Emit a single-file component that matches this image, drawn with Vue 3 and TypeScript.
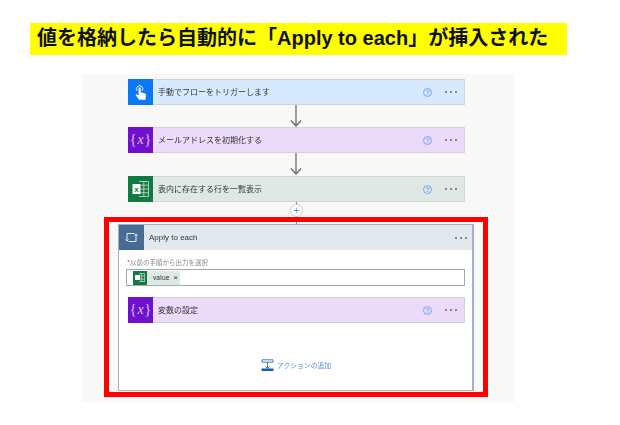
<script setup lang="ts">
interface Step { title: string; tone: string; kind: string }
const steps: Step[] = [
  { title: '手動でフローをトリガーします', tone: 'blue', kind: 'touch' },
  { title: 'メールアドレスを初期化する', tone: 'purple', kind: 'var' },
  { title: '表内に存在する行を一覧表示', tone: 'green', kind: 'excel' },
]
</script>

<template>
  <div class="page">
    <h1 class="title">値を格納したら自動的に「Apply to each」が挿入された</h1>
    <div class="canvas">
      <template v-for="(s, i) in steps" :key="s.title">
        <div class="card" :class="s.tone">
          <div class="icon" :class="s.tone">
            <svg v-if="s.kind === 'touch'" width="12" height="17" viewBox="0 0 14 19">
              <path d="M2.400 7.400a3.700 3.700 0 1 1 6 0" fill="none" stroke="#fff" stroke-width="1.100" />
              <path d="M4.200 4.600a1.200 1.200 0 0 1 2.400 0v4.600l4.600 1.100c1 .3 1.700 1 1.600 2l-.5 5.700H4.800L1 12.900c-.6-.8.400-1.800 1.300-1.200l1.900 1.300z" fill="#fff" />
            </svg>
            <span v-else-if="s.kind === 'var'" class="var">{<i>x</i>}</span>
            <svg v-else width="17" height="16" viewBox="0 0 17 16">
              <path d="M7 .5h9.500v15H7M7 4.200h9.500M7 8h9.500M7 11.800h9.500M11.800 .5v15" fill="none" stroke="#cfe3d6" stroke-width=".8" />
              <rect x="0.500" y="3" width="8" height="10" fill="#fff" />
              <text x="4.500" y="10.500" class="xl">x</text>
            </svg>
          </div>
          <span class="label">{{ s.title }}</span>
          <span class="help">?</span>
          <span class="more"><b></b><b></b><b></b></span>
        </div>
        <div v-if="i < 2" class="arrow" :class="{ short: i === 0 }">
          <svg width="12" height="22" viewBox="0 0 12 22">
            <path d="M6 0v21M1 15.500l5 5.500 5-5.500" fill="none" stroke="#6d6d6d" stroke-width="1.300" />
          </svg>
        </div>
      </template>
      <div class="link">
        <span class="plus">+</span>
      </div>
      <div class="frame">
        <div class="stub"></div>
        <div class="scope">
          <div class="scope-head">
            <div class="scope-icon">
              <svg width="13" height="11" viewBox="0 0 13 11">
                <path d="M2 9V1.500h7.500M11 2v7.500H3.500M.5 7.500L2 9l1.500-1.500M9.500 3.500L11 2l1.500 1.500" fill="none" stroke="#eef2f6" stroke-width="1" />
              </svg>
            </div>
            <span class="scope-title">Apply to each</span>
            <span class="more dark"><b></b><b></b><b></b></span>
          </div>
          <div class="scope-body">
            <div class="field-label"><em>*</em>以前の手順から出力を選択</div>
            <div class="field">
              <span class="tag">
                <span class="tag-icon">
                  <svg width="10" height="9" viewBox="0 0 10 9">
                    <path d="M4 .5h5.500v8H4M4 3h5.500M4 6h5.500M6.700 .5v8" fill="none" stroke="#cfe3d6" stroke-width=".7" />
                    <rect x="0" y="2" width="5" height="5" fill="#fff" />
                  </svg>
                </span>
                <span class="tag-text">value</span>
                <span class="tag-x">×</span>
              </span>
            </div>
            <div class="card purple inner">
              <div class="icon purple"><span class="var">{<i>x</i>}</span></div>
              <span class="label">変数の設定</span>
              <span class="help">?</span>
              <span class="more"><b></b><b></b><b></b></span>
            </div>
            <div class="add">
              <svg width="13" height="13" viewBox="0 0 13 13">
                <path d="M1 .8h11v2.400H1zM6.500 3.200v6M4.500 7.500l2 2 2-2" fill="none" stroke="#2a76b8" stroke-width=".9" />
                <rect x=".5" y="9.500" width="12" height="2.500" fill="#0f5fb0" />
              </svg>
              <span class="add-text">アクションの追加</span>
            </div>
          </div>
        </div>
      </div>
    </div>
  </div>
</template>

<style>
html, body { background: #fff; }
</style>

<style scoped>
.page {
  width: 620px;
  height: 425px;
  box-sizing: border-box;
  padding-top: 23px;
  overflow: hidden;
  font-family: "Noto Sans CJK JP", "Noto Sans", sans-serif;
  background: #fff;
}
.title {
  margin: 0 0 0 30px;
  width: 537px;
  height: 32px;
  box-sizing: border-box;
  padding-left: 7px;
  background: #ffff00;
  color: #111;
  font: 700 20px/30px "Liberation Sans", "Noto Sans CJK JP", sans-serif;
  white-space: nowrap;
}
.canvas {
  margin: 19px 0 0 82px;
  width: 432px;
  height: 328px;
  box-sizing: border-box;
  padding-top: 5px;
  background: #f8f8f8;
  display: flex;
  flex-direction: column;
}
.card {
  margin-left: 46px;
  width: 337px;
  height: 26px;
  box-sizing: border-box;
  display: flex;
  align-items: center;
  border: 1px solid #d3d3d3;
  flex: none;
}
.card.blue { background: #d6e9fd; }
.card.purple { background: #ebdbf8; }
.card.green { background: #dde9e2; }
.icon {
  width: 25px;
  height: 26px;
  margin: -1px 0 -1px -1px;
  display: flex;
  align-items: center;
  justify-content: center;
  flex: none;
}
.icon.blue { background: #0a77f5; }
.icon.purple { background: #6f10cf; }
.icon.green { background: #117a43; }
.var {
  color: #dcc9f3;
  font: 14px/1 "Liberation Serif", serif;
  white-space: nowrap;
}
.var i { padding: 0 1px; }
.xl { fill: #117a43; font: 700 8px "Liberation Sans", sans-serif; text-anchor: middle; }
.label {
  margin-left: 5px;
  font-size: 8px;
  line-height: 12px;
  color: #333;
  white-space: nowrap;
  flex: 1;
  filter: blur(0.3px);
}
.help {
  width: 7px;
  height: 7px;
  border: 1px solid #7ba4f4;
  border-radius: 50%;
  color: #7ba4f4;
  font: 700 6.500px/7px "Liberation Sans", sans-serif;
  text-align: center;
  flex: none;
}
.more {
  margin: 0 7px 0 13px;
  width: 12px;
  display: flex;
  justify-content: space-between;
  flex: none;
}
.more b { width: 2px; height: 2px; background: #666; border-radius: 50%; }
.arrow {
  margin-left: 208px;
  height: 23px;
  flex: none;
  display: flex;
}
.arrow.short { height: 22px; }
.link {
  margin-left: 214px;
  width: 1px;
  height: 15px;
  flex: none;
  background: #8a8a8a;
  display: flex;
  align-items: flex-end;
  justify-content: center;
  position: relative;
  z-index: 2;
}
.plus {
  width: 11px;
  height: 11px;
  flex: none;
  border: 1px solid #c9c9c9;
  border-radius: 50%;
  background: #fff;
  color: #3f93dc;
  font: 10px/11px "Liberation Sans", sans-serif;
  text-align: center;
}
.frame {
  margin-left: 22px;
  width: 384px;
  height: 180px;
  box-sizing: border-box;
  border: 5px solid #ff0000;
  padding: 0 9px 1px;
  flex: none;
  background: #f8f8f8;
  display: flex;
  flex-direction: column;
}
.stub {
  width: 1px;
  height: 2px;
  margin-left: 178px;
  background: #8a8a8a;
  flex: none;
}
.scope {
  flex: 1;
  box-sizing: border-box;
  background: #fff;
  border: 1px solid #a3b1c2;
  border-right-width: 2px;
  display: flex;
  flex-direction: column;
}
.scope-head {
  height: 25px;
  background: #e3e8ef;
  display: flex;
  align-items: center;
  flex: none;
}
.scope-icon {
  width: 25px;
  height: 25px;
  background: #486c94;
  display: flex;
  align-items: center;
  justify-content: center;
  flex: none;
}
.scope-title {
  margin-left: 5px;
  font: 8px/12px "Liberation Sans", sans-serif;
  color: #333;
  flex: 1;
  filter: blur(0.25px);
}
.more.dark { margin-right: 5px; }
.scope-body {
  padding: 8px 7px 0 9px;
  display: flex;
  flex-direction: column;
  flex: 1;
}
.field-label {
  font-size: 6.500px;
  line-height: 9px;
  color: #8b8b8b;
  margin-left: -1px;
  filter: blur(0.3px);
}
.field-label em { color: #d0312d; font-style: normal; }
.field {
  margin: 2px 0 0 -2px;
  height: 17px;
  box-sizing: border-box;
  border: 1px solid #a8a8a8;
  display: flex;
  align-items: center;
  padding-left: 6px;
}
.tag {
  height: 14px;
  width: 47px;
  display: flex;
  align-items: center;
  background: #dde9e2;
}
.tag-icon {
  width: 14px;
  height: 14px;
  background: #117a43;
  display: flex;
  align-items: center;
  justify-content: center;
  flex: none;
}
.tag-text {
  margin-left: 6px;
  font: 6.500px/10px "Noto Sans", sans-serif;
  color: #333;
}
.tag-x {
  margin-left: 4px;
  font: 8px/10px "Liberation Sans", sans-serif;
  color: #333;
}
.card.inner {
  margin: 11px 0 0;
  width: 337px;
}
.add {
  margin: 36px 0 0 133px;
  display: flex;
  align-items: center;
  gap: 3px;
  color: #5b8fe8;
  font-size: 6.800px;
  line-height: 13px;
}
.add-text { filter: blur(0.3px); }
</style>
